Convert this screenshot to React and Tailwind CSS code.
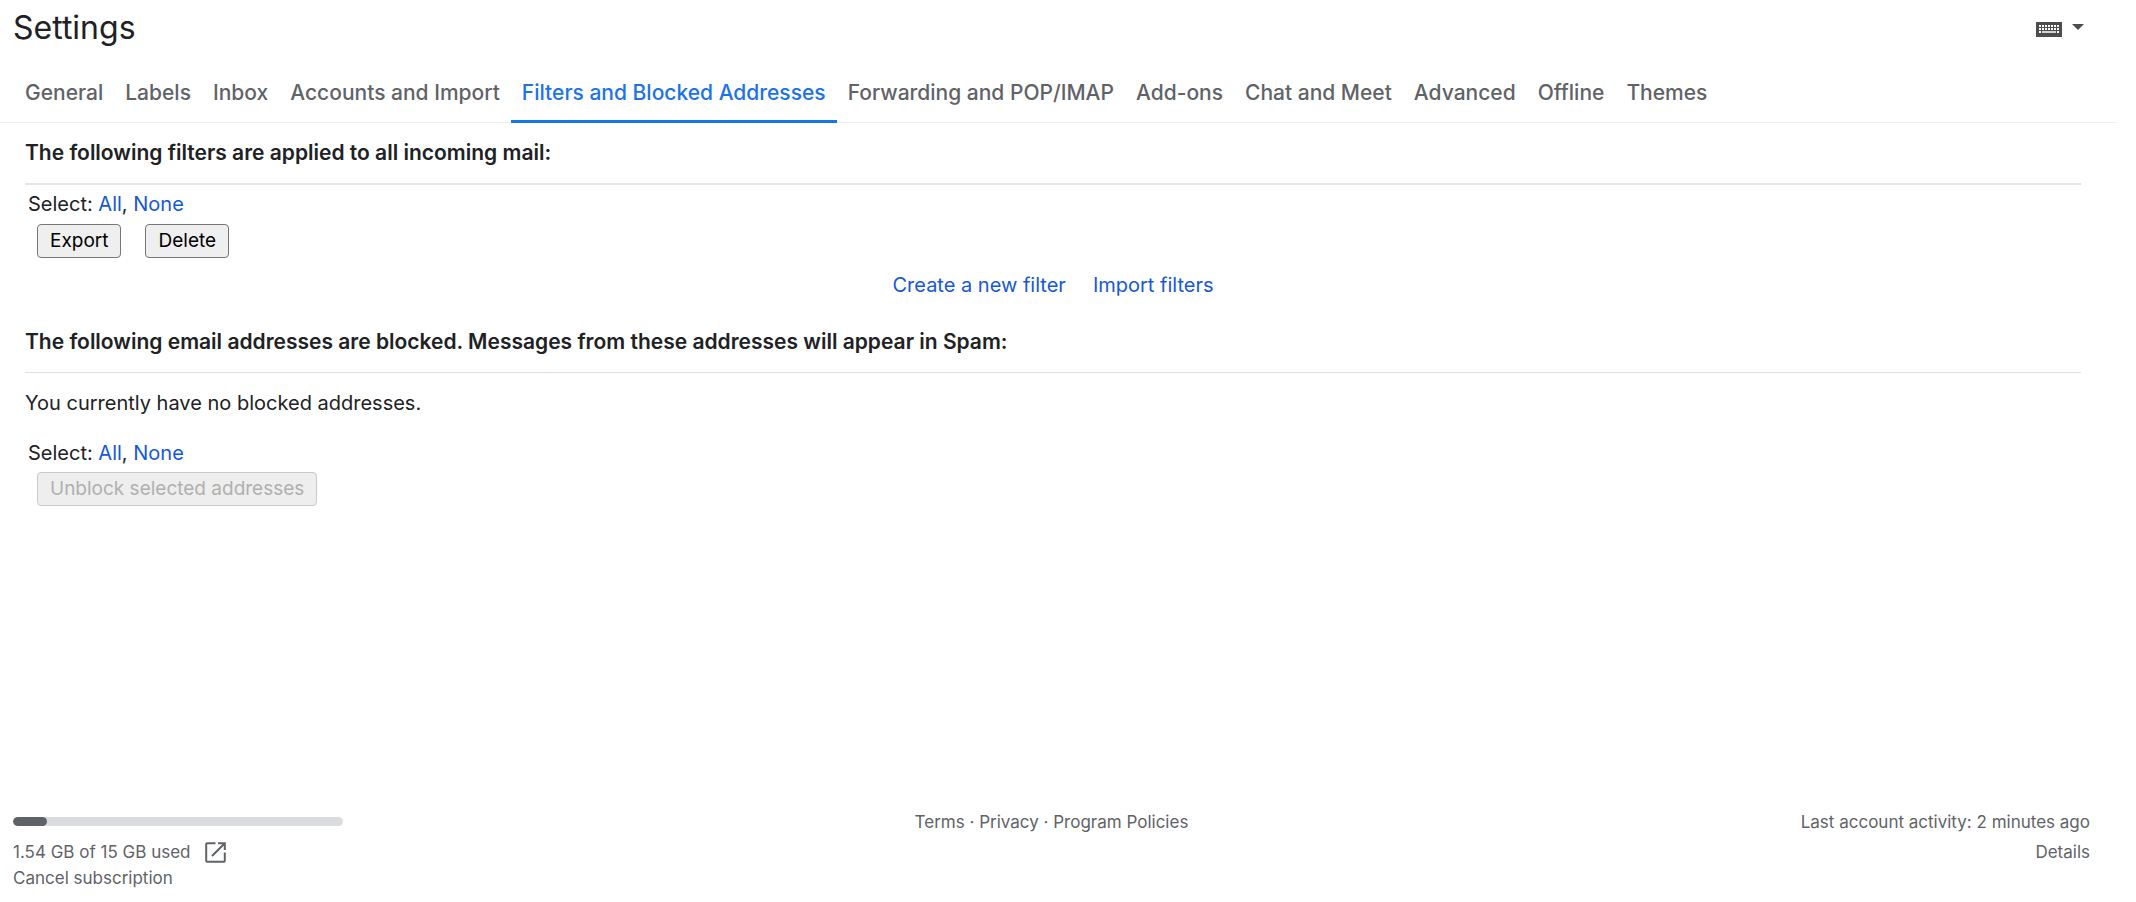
import React, { useState } from 'react';

const tabs = [
  'General',
  'Labels',
  'Inbox',
  'Accounts and Import',
  'Filters and Blocked Addresses',
  'Forwarding and POP/IMAP',
  'Add-ons',
  'Chat and Meet',
  'Advanced',
  'Offline',
  'Themes',
];

const usedGb = 1.54;
const totalGb = 15;

function KeyboardIcon() {
  return (
    <svg width="26" height="15" viewBox="0 0 26 15" aria-hidden="true">
      <rect width="26" height="15" fill="#4d4d4d" />
      <g stroke="#fff" strokeWidth="2" strokeDasharray="2 1">
        <path d="M3 4h20" />
        <path d="M3 7h20" />
        <path d="M3 10h2M21 10h2" />
      </g>
      <path d="M6 10h14" stroke="#d4d4d4" strokeWidth="2" />
    </svg>
  );
}

function OpenIcon() {
  return (
    <svg width="21" height="21" viewBox="0 0 21 21" fill="none" stroke="#5f6368" strokeWidth="2" aria-hidden="true">
      <path d="M10.5 1.2H2.2a1 1 0 0 0-1 1v16.6a1 1 0 0 0 1 1h16.6a1 1 0 0 0 1-1V10.5" />
      <path d="M13 1.2h6.8V8M19.3 1.7L7 14" />
    </svg>
  );
}

function SelectLinks() {
  return (
    <p className="px-[3px] leading-[26px]">
      Select:{' '}
      <a href="#all" className="text-[#1558d6]">All</a>,{' '}
      <a href="#none" className="text-[#1558d6]">None</a>
    </p>
  );
}

function App() {
  const [active, setActive] = useState('Filters and Blocked Addresses');

  return (
    <div className="flex min-h-screen flex-col bg-white pr-[19px] font-['Inter',sans-serif] text-[20px] text-[#202124]">
      <header className="flex h-14 items-center justify-between pl-[13px] pr-[33px]">
        <h1 className="text-[32px]">Settings</h1>
        <button type="button" aria-label="Input tools" className="flex items-center gap-[10px] pt-[2px]">
          <KeyboardIcon />
          <svg width="12" height="6" viewBox="0 0 12 6" className="mb-1" aria-hidden="true">
            <path d="M0 0h12L6 6z" fill="#4d4d4d" />
          </svg>
        </button>
      </header>

      <nav className="mt-[11px] flex border-b border-[#eceff1] pl-[14px]">
        {tabs.map((tab) => (
          <button
            key={tab}
            type="button"
            onClick={() => setActive(tab)}
            className={
              tab === active
                ? '-mb-px h-14 whitespace-nowrap border-b-3 border-[#1a73e8] px-[11px] pb-[2px] text-[21px] font-medium text-[#1a73e8]'
                : '-mb-px h-14 whitespace-nowrap border-b-3 border-transparent px-[11px] pb-[2px] text-[21px] font-medium text-[#5f6368]'
            }
          >
            {tab}
          </button>
        ))}
      </nav>

      <main className="pl-[25px] pr-9">
        <section>
          <h2 className="border-b-2 border-[#e5e5e5] pt-4 pb-4 text-[21px] font-semibold leading-7">
            The following filters are applied to all incoming mail:
          </h2>
          <div className="pt-[6px]">
            <SelectLinks />
          </div>
          <div className="flex gap-6 px-3 pt-[7px]">
            <button type="button" className="h-[34px] rounded border border-[#767676] bg-[#efefef] px-3 text-[19px] text-black">
              Export
            </button>
            <button type="button" className="h-[34px] rounded border border-[#767676] bg-[#efefef] px-3 text-[19px] text-black">
              Delete
            </button>
          </div>
          <div className="flex justify-center gap-[27px] pt-[13px] leading-7 text-[#1558d6]">
            <a href="#create">Create a new filter</a>
            <a href="#import">Import filters</a>
          </div>
        </section>

        <section className="pt-[29px]">
          <h2 className="border-b border-[#e0e0e0] pb-4 text-[21px] font-semibold leading-7">
            The following email addresses are blocked. Messages from these addresses will appear in Spam:
          </h2>
          <p className="pt-4 leading-7">You currently have no blocked addresses.</p>
          <div className="pt-[23px]">
            <SelectLinks />
          </div>
          <div className="px-3 pt-[6px]">
            <button
              type="button"
              disabled
              className="h-[34px] rounded border border-[#c9c9c9] bg-[#eeeeee] px-3 text-[19px] text-[#b0b0b0]"
            >
              Unblock selected addresses
            </button>
          </div>
        </section>
      </main>

      <footer className="mt-auto grid grid-cols-3 pb-[11px] pl-[13px] pr-[27px] text-[17px] leading-[26px] text-[#5f6368]">
        <div>
          <div className="mt-2 mb-[13px] h-[9px] w-[330px] overflow-hidden rounded-full bg-[#dadce0]">
            <div
              className="h-full rounded-full bg-[#5f6368]"
              style={{ width: `${(usedGb / totalGb) * 100}%` }}
            />
          </div>
          <div className="flex items-center gap-[14px]">
            <span>{usedGb} GB of {totalGb} GB used</span>
            <a href="#storage" aria-label="Manage storage">
              <OpenIcon />
            </a>
          </div>
          <a href="#cancel">Cancel subscription</a>
        </div>
        <p className="text-center">
          <a href="#terms">Terms</a> · <a href="#privacy">Privacy</a> · <a href="#policies">Program Policies</a>
        </p>
        <div className="text-right">
          <p>Last account activity: 2 minutes ago</p>
          <a href="#details" className="mt-1 inline-block">Details</a>
        </div>
      </footer>
    </div>
  );
}

export default App;
